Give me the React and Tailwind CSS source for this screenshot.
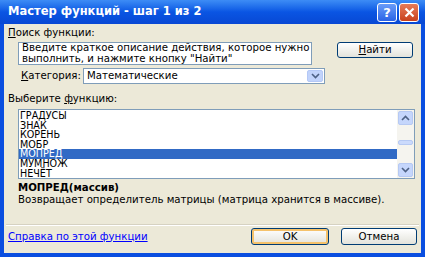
import React from 'react';

const items = ['ГРАДУСЫ', 'ЗНАК', 'КОРЕНЬ', 'МОБР', 'МОПРЕД', 'МУМНОЖ', 'НЕЧЁТ'];

const Chevron = ({ up }) => (
    <svg width="9" height="6" viewBox="0 0 9 6">
        <path d={up ? 'M1 5L4.5 1.5L8 5' : 'M1 1L4.5 4.5L8 1'} fill="none" stroke="#4d6185" strokeWidth="1.6" />
    </svg>
);

const XpButton = ({ children, className = '' }) => (
    <div className={`flex items-center justify-center rounded-[3px] border border-[#003c74] bg-gradient-to-b from-white to-[#e3e3db] text-[10.2px] text-black ${className}`}>
        {children}
    </div>
);

const App = () => {
    return (
        <div className="w-[425px] h-[257px] flex flex-col bg-[#0a4ee0] overflow-hidden" style={{ fontFamily: '"DejaVu Sans", sans-serif' }}>
            {/* title bar */}
            <div className="h-[24px] flex items-center pl-[8px] pr-[6px] bg-gradient-to-b from-[#3d8cf5] via-[#0a55e3] to-[#0848d4]">
                <span className="text-white font-bold text-[11.5px] leading-none">Мастер функций - шаг 1 из 2</span>
                <div className="ml-auto flex gap-[2px]">
                    <div className="w-[20px] h-[19px] rounded-[3px] border border-white bg-gradient-to-b from-[#6a9cf8] to-[#2a62e6] flex items-center justify-center text-white font-bold text-[13px] leading-none">?</div>
                    <div className="w-[20px] h-[19px] rounded-[3px] border border-white bg-gradient-to-b from-[#e77b57] to-[#c8401a] flex items-center justify-center">
                        <svg width="11" height="11" viewBox="0 0 11 11"><path d="M1.5 1.5L9.5 9.5M9.5 1.5L1.5 9.5" stroke="white" strokeWidth="2.2" /></svg>
                    </div>
                </div>
            </div>

            {/* body */}
            <div className="flex-1 mx-[4px] mb-[4px] bg-[#ece9d8] flex flex-col text-[10.2px] text-black leading-[12px]">
                <div className="pl-[4px] pt-[3px] h-[18px]"><span className="underline">П</span>оиск функции:</div>

                <div className="flex h-[26px]">
                    <div className="ml-[14px] w-[294px] h-[23px] border border-[#7f9db9] bg-white px-[3px] leading-[10.5px] whitespace-nowrap overflow-hidden">
                        Введите краткое описание действия, которое нужно<br />выполнить, и нажмите кнопку "Найти"
                    </div>
                    <XpButton className="ml-[25px] w-[76px] h-[16px]"><span><span className="underline">Н</span>айти</span></XpButton>
                </div>

                <div className="flex items-center h-[16px] mb-[9px]">
                    <div className="ml-[17px] w-[62px]"><span className="underline">К</span>атегория:</div>
                    <div className="w-[242px] h-[16px] border border-[#7f9db9] bg-white flex items-center pl-[3px]">
                        <span>Математические</span>
                        <div className="ml-auto mr-[1px] w-[16px] h-[12px] rounded-[2px] bg-[#c1d3fb] border border-[#b4c8f6] flex items-center justify-center"><Chevron /></div>
                    </div>
                </div>

                <div className="pl-[4px] h-[16px]">Выберите <span className="underline">ф</span>ункцию:</div>

                <div className="ml-[14px] w-[397px] h-[70px] border border-[#7f9db9] bg-white flex">
                    <div className="flex-1 flex flex-col pt-[1px] text-[9.6px]">
                        {items.map((it) => (
                            <div key={it} className={`h-[10px] flex items-center leading-none pl-[1px] ${it === 'МОПРЕД' ? 'bg-[#316ac5] text-white' : ''}`}>{it}</div>
                        ))}
                    </div>
                    <div className="w-[17px] bg-[#f5f4ef] flex flex-col">
                        <div className="h-[14px] m-[1px] rounded-[2px] bg-[#c5d6fc] border border-[#b6c9f3] flex items-center justify-center"><Chevron up /></div>
                        <div className="flex-1 pt-[14px]">
                            <div className="h-[5px] mx-[1px] rounded-[2px] bg-[#cbdafc] border border-[#b6c9f3]" />
                        </div>
                        <div className="h-[14px] m-[1px] rounded-[2px] bg-[#c5d6fc] border border-[#b6c9f3] flex items-center justify-center"><Chevron /></div>
                    </div>
                </div>

                <div className="pl-[14px] pt-[3px] h-[15px] font-bold">МОПРЕД(массив)</div>
                <div className="pl-[14px] h-[14px]">Возвращает определитель матрицы (матрица хранится в массиве).</div>

                <div className="mt-[16px] mx-[2px] h-[2px] border-t border-[#d6d2c2] border-b border-b-white" />

                <div className="flex items-center mt-[2px] h-[17px]">
                    <span className="ml-[4px] text-[#0000ff] underline">Справка по этой функции</span>
                    <XpButton className="ml-auto w-[78px] h-[17px] border-[#003c74] shadow-[inset_0_0_0_2px_#f5c26b]">OK</XpButton>
                    <XpButton className="ml-[12px] mr-[4px] w-[76px] h-[17px]">Отмена</XpButton>
                </div>
            </div>
        </div>
    );
};

export default App;
